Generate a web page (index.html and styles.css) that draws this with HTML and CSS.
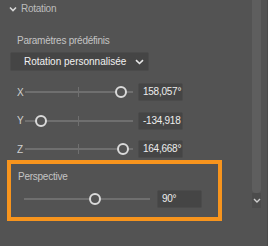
FILE: index.html
```html
<!DOCTYPE html>
<html lang="fr">
  <head>
    <meta charset="UTF-8" />
    <title>Rotation</title>
    <link rel="stylesheet" href="styles.css">
  </head>
  <body>
    <div class="panel">
      <div class="content">

        <div class="section-header">
          <svg class="chev" width="8" height="6" viewBox="0 0 8 6"><path d="M1 1.5 L4 4.5 L7 1.5" fill="none" stroke="#d8d8d8" stroke-width="1.6"/></svg>
          <span>Rotation</span>
        </div>

        <div class="label presets">Paramètres prédéfinis</div>
        <div class="dropdown">
          <span>Rotation personnalisée</span>
          <svg width="9" height="6" viewBox="0 0 9 6"><path d="M1 1.2 L4.5 4.5 L8 1.2" fill="none" stroke="#e6e6e6" stroke-width="1.6"/></svg>
        </div>

        <div class="sliders">
          <div class="slider-row">
            <span class="axis">X</span>
            <div class="track"><i class="tick"></i><i class="thumb" style="left: 90px"></i></div>
            <div class="value">158,057°</div>
          </div>
          <div class="slider-row">
            <span class="axis">Y</span>
            <div class="track"><i class="tick"></i><i class="thumb" style="left: 10px"></i></div>
            <div class="value">-134,918</div>
          </div>
          <div class="slider-row">
            <span class="axis">Z</span>
            <div class="track"><i class="tick"></i><i class="thumb" style="left: 92px"></i></div>
            <div class="value">164,668°</div>
          </div>
        </div>

        <div class="highlight">
          <div class="label">Perspective</div>
          <div class="slider-row persp">
            <div class="track"><i class="thumb" style="left: 65px"></i></div>
            <div class="value">90°</div>
          </div>
        </div>

      </div>
      <div class="scrollbar">
        <div class="scroll-track"></div>
        <div class="scroll-down">
          <svg width="8" height="5" viewBox="0 0 8 5"><path d="M1 1 L4 4 L7 1" fill="none" stroke="#cfcfcf" stroke-width="1.4"/></svg>
        </div>
      </div>
    </div>
  </body>
</html>
```

FILE: styles.css
```css
body {
  margin: 0;
  background-color: #535353;
  font-family: "Liberation Sans", Arial, sans-serif;
  font-size: 10px;
  letter-spacing: -0.25px;
}

.panel {
  width: 268px;
  height: 246px;
  display: flex;
  background-color: #535353;
  overflow: hidden;
}

.content {
  flex: 1;
}

.section-header {
  display: flex;
  align-items: center;
  gap: 4px;
  height: 17px;
  padding-left: 9px;
  color: #bcbcbc;
}

.label {
  color: #c4c4c4;
  height: 16px;
  line-height: 16px;
}

.presets {
  margin-top: 16px;
  padding-left: 17px;
}

.dropdown {
  margin: 3px 0 0 10px;
  width: 139px;
  height: 19px;
  border: 1px solid #4b4b4b;
  border-radius: 2px;
  background-color: #454545;
  display: flex;
  align-items: center;
  justify-content: space-between;
  padding: 0 4px 0 13px;
  box-sizing: border-box;
  color: #f2f2f2;
  letter-spacing: 0;
  white-space: nowrap;
}

.sliders {
  padding-top: 12px;
  display: flex;
  flex-direction: column;
  gap: 10.5px;
}

.slider-row {
  display: flex;
  align-items: center;
  height: 18px;
  padding-left: 17px;
}

.axis {
  width: 8px;
  color: #d0d0d0;
}

.track {
  position: relative;
  width: 108px;
  height: 2px;
  background-color: #6f6f6f;
  margin-right: 5px;
}

.tick {
  position: absolute;
  left: 53px;
  top: -4px;
  width: 1px;
  height: 10px;
  background-color: #6f6f6f;
}

.thumb {
  position: absolute;
  top: -5px;
  width: 8px;
  height: 8px;
  border: 2px solid #dadada;
  border-radius: 50%;
  background-color: #535353;
}

.value {
  width: 45px;
  height: 18px;
  box-sizing: border-box;
  border: 1px solid #4b4b4b;
  border-radius: 2px;
  background-color: #454545;
  color: #ededed;
  line-height: 16px;
  padding-left: 4px;
}

.highlight {
  margin: 2px 0 0 7px;
  width: 215px;
  height: 61px;
  box-sizing: border-box;
  border: 4px solid #f7941d;
  padding: 5px 0 0 7px;
}

.highlight .label {
  margin-bottom: 5px;
}

.slider-row.persp {
  padding-left: 6px;
}

.persp .track {
  width: 126px;
  margin-right: 7px;
}

.scrollbar {
  width: 15px;
  display: flex;
  flex-direction: column;
  border-right: 1px solid #4a4a4a;
}

.scroll-track {
  width: 9px;
  height: 193px;
  background-color: #5e5e5e;
  border-radius: 0 0 4px 4px;
}

.scroll-down {
  width: 9px;
  height: 15px;
  background-color: #4c4c4c;
  display: flex;
  align-items: center;
  justify-content: center;
}
```
